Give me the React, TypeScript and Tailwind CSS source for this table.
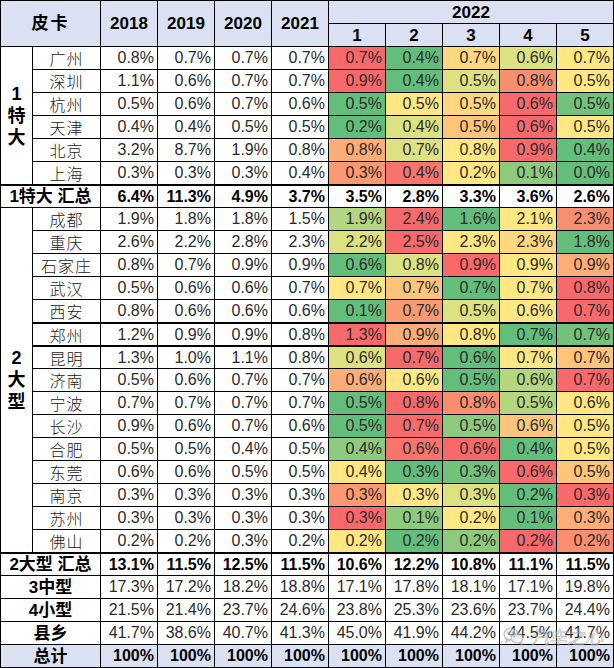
import React from "react";

const NUM = "font-['Liberation_Sans_Narrow','Liberation_Sans',sans-serif]";
const HEAD = "font-['Liberation_Sans','Noto_Sans_CJK_SC',sans-serif] font-bold";
const CJK = "font-['Noto_Sans_CJK_SC',sans-serif]";

const bg: Record<string, string> = {
  R: "bg-[#F8696B]",
  R1: "bg-[#F8746D]",
  RS: "bg-[#F98F70]",
  RO: "bg-[#F99A72]",
  O: "bg-[#FBAE78]",
  OY: "bg-[#FDC47C]",
  YO: "bg-[#FED880]",
  Y: "bg-[#FFE884]",
  YG: "bg-[#DCE182]",
  LG: "bg-[#B5D680]",
  G2: "bg-[#8ECA7E]",
  G1: "bg-[#72C27C]",
  G: "bg-[#63BE7B]",
};

type City = { name: string; y: string[]; m: string[]; c: string[]; thick?: boolean };

const big1: City[] = [
  { name: "广州", y: ["0.8", "0.7", "0.7", "0.7"], m: ["0.7", "0.4", "0.7", "0.6", "0.7"], c: ["R", "G", "YO", "YG", "Y"] },
  { name: "深圳", y: ["1.1", "0.6", "0.7", "0.7"], m: ["0.9", "0.4", "0.5", "0.8", "0.5"], c: ["R", "G", "YG", "RS", "Y"] },
  { name: "杭州", y: ["0.5", "0.6", "0.7", "0.6"], m: ["0.5", "0.5", "0.5", "0.6", "0.5"], c: ["G", "Y", "YO", "R", "G1"] },
  { name: "天津", y: ["0.4", "0.4", "0.5", "0.5"], m: ["0.2", "0.4", "0.5", "0.6", "0.5"], c: ["G", "YG", "OY", "R", "Y"] },
  { name: "北京", y: ["3.2", "8.7", "1.9", "0.8"], m: ["0.8", "0.7", "0.8", "0.9", "0.4"], c: ["O", "YG", "Y", "R", "G"] },
  { name: "上海", y: ["0.3", "0.3", "0.3", "0.4"], m: ["0.3", "0.4", "0.2", "0.1", "0.0"], c: ["RO", "R1", "Y", "G2", "G"] },
];

const big2: City[] = [
  { name: "成都", y: ["1.9", "1.8", "1.8", "1.5"], m: ["1.9", "2.4", "1.6", "2.1", "2.3"], c: ["LG", "R", "G", "Y", "RS"] },
  { name: "重庆", y: ["2.6", "2.2", "2.8", "2.3"], m: ["2.2", "2.5", "2.3", "2.3", "1.8"], c: ["YG", "R", "Y", "YO", "G"] },
  { name: "石家庄", y: ["0.8", "0.7", "0.9", "0.9"], m: ["0.6", "0.8", "0.9", "0.9", "0.9"], c: ["G", "YG", "R", "Y", "O"] },
  { name: "武汉", y: ["0.5", "0.6", "0.6", "0.7"], m: ["0.7", "0.7", "0.7", "0.7", "0.8"], c: ["Y", "OY", "G", "Y", "R"] },
  { name: "西安", y: ["0.8", "0.6", "0.6", "0.6"], m: ["0.1", "0.7", "0.5", "0.6", "0.7"], c: ["G", "RO", "YG", "Y", "R"] },
  { name: "郑州", y: ["1.2", "0.9", "0.9", "0.8"], m: ["1.3", "0.9", "0.8", "0.7", "0.7"], c: ["R", "O", "Y", "G", "G1"], thick: true },
  { name: "昆明", y: ["1.3", "1.0", "1.1", "0.8"], m: ["0.6", "0.7", "0.6", "0.7", "0.7"], c: ["YG", "R", "G", "Y", "OY"], thick: true },
  { name: "济南", y: ["0.5", "0.6", "0.7", "0.7"], m: ["0.6", "0.6", "0.5", "0.6", "0.7"], c: ["O", "Y", "G", "LG", "R"] },
  { name: "宁波", y: ["0.7", "0.7", "0.7", "0.7"], m: ["0.5", "0.8", "0.8", "0.5", "0.6"], c: ["G", "R", "RS", "LG", "Y"] },
  { name: "长沙", y: ["0.9", "0.6", "0.7", "0.6"], m: ["0.5", "0.7", "0.5", "0.6", "0.5"], c: ["G", "R", "G2", "OY", "Y"] },
  { name: "合肥", y: ["0.5", "0.5", "0.4", "0.5"], m: ["0.4", "0.6", "0.6", "0.4", "0.5"], c: ["G2", "R1", "R", "G", "Y"] },
  { name: "东莞", y: ["0.6", "0.6", "0.5", "0.5"], m: ["0.4", "0.3", "0.3", "0.6", "0.5"], c: ["Y", "G", "G1", "R", "OY"] },
  { name: "南京", y: ["0.3", "0.3", "0.3", "0.3"], m: ["0.3", "0.3", "0.3", "0.2", "0.3"], c: ["RO", "Y", "YG", "G", "R"] },
  { name: "苏州", y: ["0.3", "0.3", "0.3", "0.3"], m: ["0.3", "0.1", "0.2", "0.1", "0.3"], c: ["R", "G2", "Y", "G", "O"] },
  { name: "佛山", y: ["0.2", "0.2", "0.3", "0.2"], m: ["0.2", "0.2", "0.2", "0.2", "0.2"], c: ["Y", "G", "G2", "R", "RS"] },
];

type Total = { label: string; v: string[]; bold?: boolean; thick?: boolean; blue?: boolean };

const sum1: Total = { label: "1特大 汇总", v: ["6.4", "11.3", "4.9", "3.7", "3.5", "2.8", "3.3", "3.6", "2.6"], bold: true, thick: true };
const tail: Total[] = [
  { label: "2大型 汇总", v: ["13.1", "11.5", "12.5", "11.5", "10.6", "12.2", "10.8", "11.1", "11.5"], bold: true, thick: true },
  { label: "3中型", v: ["17.3", "17.2", "18.2", "18.8", "17.1", "17.8", "18.1", "17.1", "19.8"] },
  { label: "4小型", v: ["21.5", "21.4", "23.7", "24.6", "23.8", "25.3", "23.6", "23.7", "24.4"] },
  { label: "县乡", v: ["41.7", "38.6", "40.7", "41.3", "45.0", "41.9", "44.2", "44.5", "41.7"] },
  { label: "总计", v: ["100", "100", "100", "100", "100", "100", "100", "100", "100"], bold: true, blue: true },
];

function Num({ v, cls = "bg-white", bold, thick }: { v: string; cls?: string; bold?: boolean; thick?: boolean }) {
  return (
    <div
      className={`${cls} ${NUM} ${bold ? "font-bold text-black" : "text-[#2b2b2b]"} ${
        thick ? "border-t border-black" : ""
      } flex items-center justify-end pr-[3px] text-[16px] leading-none`}
    >
      {v}%
    </div>
  );
}

function CityRows({ rows }: { rows: City[] }) {
  return (
    <>
      {rows.map((r) => (
        <React.Fragment key={r.name}>
          <div
            className={`bg-white ${CJK} ${r.thick ? "border-t border-black" : ""} flex items-center justify-center text-[16px] font-light tracking-[1px] text-[#222] leading-none`}
          >
            {r.name}
          </div>
          {r.y.map((v, i) => (
            <Num key={"y" + i} v={v} thick={r.thick} />
          ))}
          {r.m.map((v, i) => (
            <Num key={"m" + i} v={v} cls={bg[r.c[i]]} thick={r.thick} />
          ))}
        </React.Fragment>
      ))}
    </>
  );
}

function TotalRow({ t }: { t: Total }) {
  const base = t.blue ? "bg-[#D9E1F2]" : "bg-white";
  return (
    <>
      <div
        className={`${base} ${HEAD} ${t.thick ? "border-t border-black" : ""} col-span-2 flex items-center justify-center text-[17px] text-black leading-none`}
      >
        {t.label}
      </div>
      {t.v.map((v, i) => (
        <Num key={i} v={v} cls={base} bold={t.bold} thick={t.thick} />
      ))}
    </>
  );
}

function Region({ lines, span }: { lines: string[]; span: string }) {
  return (
    <div className={`bg-white ${HEAD} ${span} flex flex-col items-center justify-center text-[18px] leading-[22px] text-black`}>
      {lines.map((l) => (
        <span key={l}>{l}</span>
      ))}
    </div>
  );
}

export default function App() {
  const years = ["2018", "2019", "2020", "2021"];
  const head = `bg-[#D9E1F2] ${HEAD} flex items-center justify-center text-[17px] text-black leading-none`;
  return (
    <div className="relative w-[614px] h-[668px] overflow-hidden bg-white">
      <div className="grid grid-cols-[31px_67px_56px_56px_56px_56px_56px_56px_56px_56px_56px] auto-rows-[22px] gap-px bg-black p-px">
        <div className={`${head} col-span-2 row-span-2 tracking-[2px]`}>皮卡</div>
        {years.map((y) => (
          <div key={y} className={`${head} row-span-2`}>
            {y}
          </div>
        ))}
        <div className={`${head} col-span-5`}>2022</div>
        {["1", "2", "3", "4", "5"].map((m) => (
          <div key={m} className={head}>
            {m}
          </div>
        ))}

        <Region lines={["1", "特", "大"]} span="row-span-6" />
        <CityRows rows={big1} />
        <TotalRow t={sum1} />

        <Region lines={["2", "大", "型"]} span="row-span-15" />
        <CityRows rows={big2} />
        {tail.map((t) => (
          <TotalRow key={t.label} t={t} />
        ))}
      </div>

      {/* watermark */}
      <div className="pointer-events-none absolute left-[503px] top-[626px] flex items-center gap-[6px] opacity-70">
        <svg width="22" height="20" viewBox="0 0 22 20" fill="none" stroke="#9aa0a6" strokeWidth="1.2">
          <ellipse cx="8" cy="8" rx="7" ry="6" fill="rgba(255,255,255,0.6)" />
          <path d="M4 13 L3 16 L7 14" />
          <ellipse cx="14" cy="12" rx="6" ry="5" fill="rgba(255,255,255,0.6)" />
          <path d="M18 16 L19 18.5 L16 17" />
          <circle cx="5.5" cy="7" r="0.8" fill="#9aa0a6" />
          <circle cx="10" cy="7" r="0.8" fill="#9aa0a6" />
        </svg>
        <span
          className={`${CJK} text-[18px] italic leading-none text-white/80 [-webkit-text-stroke:0.6px_#8a8f95]`}
        >
          汽车之心
        </span>
      </div>
    </div>
  );
}
